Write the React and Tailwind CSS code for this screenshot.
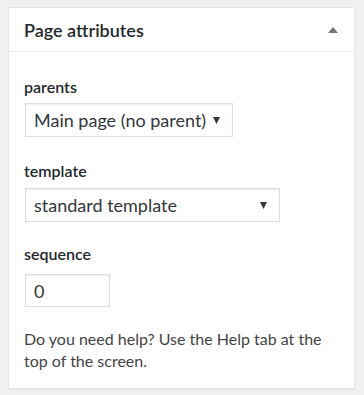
import React from 'react';

const font = { fontFamily: 'Lato, "Open Sans", Arial, sans-serif' };

const Caret = () => (
  <svg width="7" height="7" viewBox="0 0 7 7">
    <path d="M0 0 H7 L3.5 7 Z" fill="#32373c" />
  </svg>
);

const SelectBox = ({ value, width }) => (
  <div
    className={`ml-px flex items-center justify-between h-[34px] border border-[#dddddd] bg-white pl-[8px] pr-[12px] shadow-[inset_0_1px_2px_rgba(0,0,0,0.07)] ${width}`}
  >
    <span className="text-[18px] text-[#32373c] leading-none">{value}</span>
    <Caret />
  </div>
);

const App = () => {
  return (
    <div className="w-[364px] h-[395px] bg-[#f1f1f1] pt-[7px] pl-[8px] pr-[9px]" style={font}>
      <div className="bg-white border border-[#e5e5e5] shadow-[0_1px_1px_rgba(0,0,0,0.04)] h-[382px]">
        <div className="flex items-center justify-between h-[44px] border-b border-[#eeeeee] pl-[15px] pr-[16px]">
          <h2 className="text-[18px] font-semibold text-[#23282d] leading-none">Page attributes</h2>
          <svg width="10" height="6" viewBox="0 0 10 6">
            <path d="M0 6 L5 0 L10 6 Z" fill="#72777c" />
          </svg>
        </div>
        <div className="pl-[15px] pr-[15px] pt-[25px]">
          <p className="text-[16px] font-semibold text-[#23282d] leading-[20px]">parents</p>
          <div className="mt-[6px]">
            <SelectBox value="Main page (no parent)" width="w-[208px]" />
          </div>
          <p className="mt-[24px] text-[16px] font-semibold text-[#23282d] leading-[20px]">template</p>
          <div className="mt-[7px]">
            <SelectBox value="standard template" width="w-[255px]" />
          </div>
          <p className="mt-[22px] text-[16px] font-semibold text-[#23282d] leading-[20px]">sequence</p>
          <div className="mt-[10px] ml-px w-[85px] h-[33px] border border-[#dddddd] flex items-center pl-[8px] shadow-[inset_0_1px_2px_rgba(0,0,0,0.07)]">
            <span className="text-[18px] text-[#32373c] leading-none">0</span>
          </div>
          <p className="mt-[21px] text-[16px] text-[#444444] leading-[22px]">
            Do you need help? Use the Help tab at the top of the screen.
          </p>
        </div>
      </div>
    </div>
  );
};

export default App;
